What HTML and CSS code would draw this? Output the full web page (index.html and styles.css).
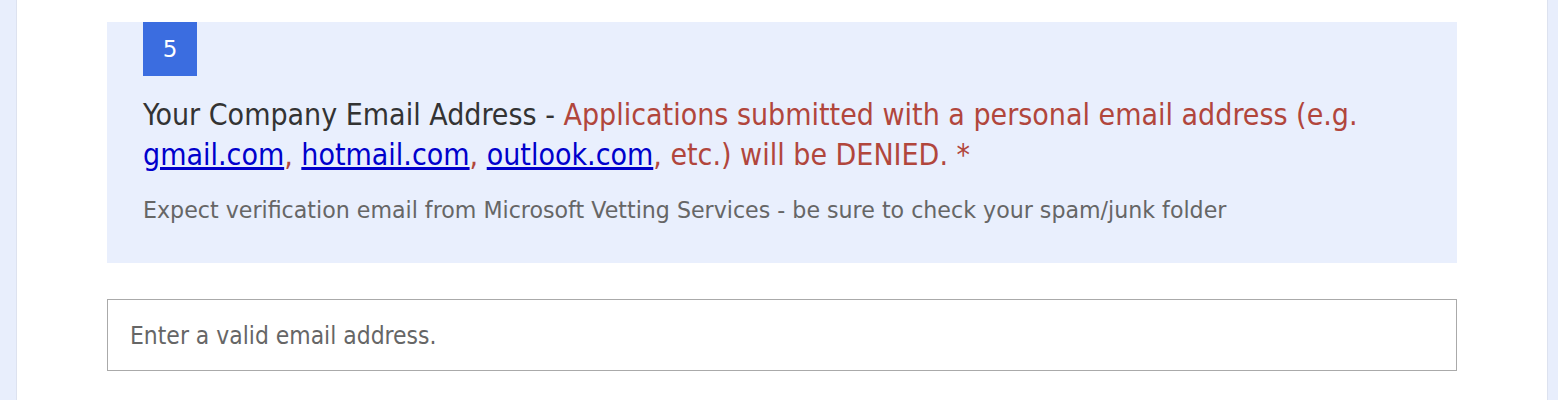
FILE: index.html
```html
<!DOCTYPE html>
<html>
<head>
<meta charset="utf-8">
<link rel="stylesheet" href="styles.css">
</head>
<body>
<div class="card">
  <div class="question">
    <div class="badge">5</div>
    <div class="title">Your Company Email Address - <span class="warn">Applications submitted with a personal email address (e.g. <a href="#">gmail.com</a>, <a href="#">hotmail.com</a>, <a href="#">outlook.com</a>, etc.) will be DENIED. *</span></div>
    <div class="hint">Expect verification email from Microsoft Vetting Services - be sure to check your spam/junk folder</div>
  </div>
  <div class="answer">
    <input class="field" type="text" placeholder="Enter a valid email address.">
  </div>
</div>
</body>
</html>
```

FILE: styles.css
```css
html, body {
  margin: 0;
  padding: 0;
  height: 400px;
  overflow: hidden;
}
body {
  background: #e8eefc;
  font-family: "DejaVu Sans Condensed", "DejaVu Sans", sans-serif;
}
.card {
  margin-left: 17px;
  width: 1530px;
  height: 400px;
  background: #fff;
  box-shadow: -1px 0 0 #dde2ef, 1px 0 0 #dde2ef;
  padding: 22px 90px 0;
  box-sizing: border-box;
}
.question {
  background: #e9effd;
  padding: 0 36px 39px;
}
.badge {
  width: 54px;
  height: 54px;
  background: #3b6de0;
  color: #fff;
  font-family: "DejaVu Sans", sans-serif;
  font-size: 23px;
  display: flex;
  align-items: center;
  justify-content: center;
}
.title {
  margin-top: 19px;
  font-size: 30px;
  line-height: 40px;
  color: #333;
}
.warn {
  color: #b1463c;
}
.warn a {
  color: #0000cc;
}
.hint {
  margin-top: 21px;
  font-family: "DejaVu Sans", sans-serif;
  font-size: 22.15px;
  line-height: 28px;
  color: #666;
}
.answer {
  margin-top: 36px;
}
.field {
  display: block;
  width: 100%;
  height: 72px;
  box-sizing: border-box;
  border: 1px solid #aaa;
  padding: 0 22px;
  font-family: inherit;
  font-size: 24.4px;
  color: #333;
  background: #fff;
  outline: none;
}
.field::placeholder {
  color: #666;
}
```
